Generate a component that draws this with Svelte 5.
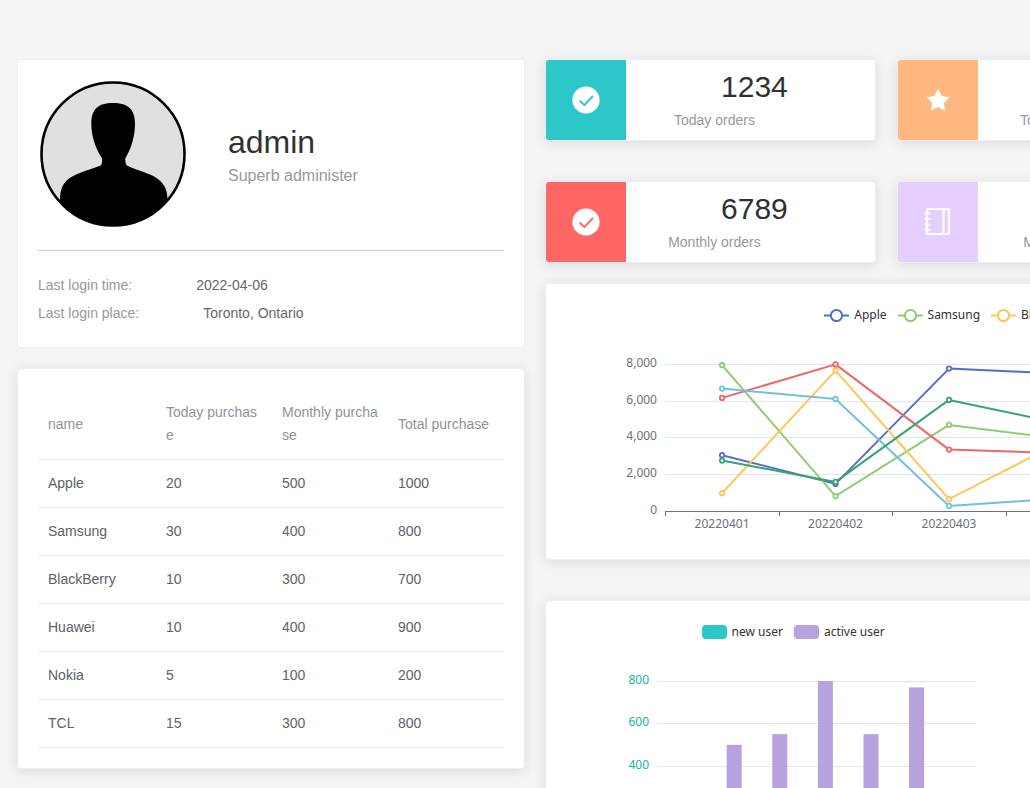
<script>
  const rows = [
    { name: 'Apple', today: 20, month: 500, total: 1000 },
    { name: 'Samsung', today: 30, month: 400, total: 800 },
    { name: 'BlackBerry', today: 10, month: 300, total: 700 },
    { name: 'Huawei', today: 10, month: 400, total: 900 },
    { name: 'Nokia', today: 5, month: 100, total: 200 },
    { name: 'TCL', today: 15, month: 300, total: 800 }
  ];

  const stats = [
    { value: 1234, label: 'Today orders', icon: 'success', color: '#2ec7c9' },
    { value: 3421, label: 'Today revenue', icon: 'star', color: '#ffb980' },
    { value: 1234, label: 'Today visitors', icon: 'success', color: '#5ab1ef' },
    { value: 6789, label: 'Monthly orders', icon: 'success', color: '#ff6666' },
    { value: 5678, label: 'Monthly sales', icon: 'notebook', color: '#e5cfff' },
    { value: 1234, label: 'Monthly visitors', icon: 'star', color: '#5ab1ef' }
  ];

  const series = [
    { name: 'Apple', color: '#5470c6', data: [3058, 1497, 7771, 7494, 5200, 3100, 4400] },
    { name: 'Samsung', color: '#91cc75', data: [7956, 827, 4707, 3946, 2600, 5100, 6200] },
    { name: 'BlackBerry', color: '#fac858', data: [990, 7663, 664, 3837, 6100, 2200, 1500] },
    { name: 'Huawei', color: '#ee6666', data: [6177, 8000, 3363, 3162, 1900, 4700, 7100] },
    { name: 'Nokia', color: '#73c0de', data: [6683, 6122, 299, 707, 3500, 6400, 2800] },
    { name: 'TCL', color: '#3ba272', data: [2765, 1605, 6068, 4762, 7200, 900, 5300] }
  ];
  const days = ['20220401', '20220402', '20220403', '20220404', '20220405', '20220406', '20220407'];

  const left = 99.3;
  const right = 893.7;
  const step = (right - left) / days.length;
  const px = (i) => left + step * (i + 0.5);
  const py = (v) => 185.4 - (v * 147) / 8000;
  const lineTicks = [8000, 6000, 4000, 2000, 0];

  const bars = [
    { name: 'Mon', fresh: 5, active: 200 },
    { name: 'Tue', fresh: 12, active: 500 },
    { name: 'Wed', fresh: 60, active: 550 },
    { name: 'Thu', fresh: 65, active: 800 },
    { name: 'Fri', fresh: 40, active: 550 },
    { name: 'Sat', fresh: 60, active: 770 },
    { name: 'Sun', fresh: 30, active: 170 }
  ];
  const barLeft = 91;
  const barRight = 410;
  const band = (barRight - barLeft) / bars.length;
  const by = (v) => 208 - (v * 170) / 800;
  const barTicks = [800, 600, 400, 200, 0];
</script>

<main class="dashboard">
  <div class="column side">
    <section class="card profile">
      <div class="user">
        <svg class="avatar" viewBox="0 0 150 150" aria-hidden="true">
          <clipPath id="face"><circle cx="75" cy="74" r="72" /></clipPath>
          <circle cx="75" cy="74" r="71.5" fill="#e0e0e0" />
          <path
            clip-path="url(#face)"
            d="M75 23C90 23 97 29 97 44C97 58 92 71 87.300 78.300C87.300 82 87.500 84 89 85.500C95 89 107 92 115.300 96C126 102 129.500 109 129.500 120L129 150H22V120C22 109 25 101 35.300 96C44 91.500 57 88 62.700 85.500C64 84 64.300 82 64 78.300C59 71 53.300 58 53.300 44C53.300 29 60 23 75 23Z"
          />
          <circle cx="75" cy="74" r="71.5" fill="none" stroke="#000" stroke-width="2.600" />
        </svg>
        <div>
          <h1>admin</h1>
          <p class="role">Superb administer</p>
        </div>
      </div>
      <div class="login">
        <p>Last login time:<span>2022-04-06</span></p>
        <p>Last login place:<span>Toronto, Ontario</span></p>
      </div>
    </section>

    <section class="card raised">
      <table>
        <thead>
          <tr>
            <th scope="col">name</th>
            <th scope="col">Today purchase</th>
            <th scope="col">Monthly purchase</th>
            <th scope="col">Total purchase</th>
          </tr>
        </thead>
        <tbody>
          {#each rows as row}
            <tr>
              <td>{row.name}</td>
              <td>{row.today}</td>
              <td>{row.month}</td>
              <td>{row.total}</td>
            </tr>
          {/each}
        </tbody>
      </table>
    </section>
  </div>

  <div class="column">
    <div class="stats">
      {#each stats as stat}
        <section class="stat raised">
          <div class="badge" style:background={stat.color}>
            <svg viewBox="-15 -15 30 30" aria-hidden="true">
              {#if stat.icon === 'success'}
                <circle r="13.600" fill="#fff" />
                <path d="M-6.300 .8L-1.600 5.200L6.900 -4" fill="none" stroke={stat.color} stroke-width="1.900" />
              {:else if stat.icon === 'star'}
                <path
                  fill="#fff"
                  d="M0 -11.300L3.600 -4L11.600 -2.800L5.800 2.800L7.200 10.700L0 7L-7.200 10.700L-5.800 2.800L-11.600 -2.800L-3.600 -4Z"
                />
              {:else}
                <rect x="-11" y="-13" width="22" height="25" rx="1" fill="none" stroke="#fff" stroke-width="2.200" />
                <path
                  d="M5.500 -12.500V12M-13.500 -8.500H-7.500M-13.500 -3H-7.500M-13.500 2.500H-7.500M-13.500 8H-7.500"
                  fill="none"
                  stroke="#fff"
                  stroke-width="2.200"
                />
              {/if}
            </svg>
          </div>
          <div class="detail">
            <p class="value">{stat.value}</p>
            <p class="label">{stat.label}</p>
          </div>
        </section>
      {/each}
    </div>

    <section class="card raised chart">
      <ul class="legend">
        {#each series as s}
          <li>
            <svg width="25" height="14" viewBox="0 0 25 14" aria-hidden="true">
              <path d="M0 7.500H25" stroke={s.color} stroke-width="2" />
              <circle cx="12.500" cy="7.500" r="5.600" fill="#fff" stroke={s.color} stroke-width="2" />
            </svg>
            {s.name}
          </li>
        {/each}
      </ul>
      <svg class="plot" viewBox="0 0 992 213" role="img" aria-label="Orders by brand">
        {#each lineTicks as t}
          <path
            d="M{left} {Math.floor(py(t)) + 0.5}H{right}"
            stroke={t === 0 ? '#6e7079' : '#e0e6f1'}
          />
          <text x="91" y={Math.floor(py(t)) + 3} text-anchor="end">{t.toLocaleString('en-US')}</text>
        {/each}
        {#each days as day, i}
          <path d="M{Math.round(left + step * i) + 0.5} 185V190" stroke="#6e7079" />
          <text x={px(i)} y="202" text-anchor="middle">{day}</text>
        {/each}
        {#each series as s}
          <polyline
            points={s.data.map((v, i) => `${px(i)},${py(v)}`).join(' ')}
            fill="none"
            stroke={s.color}
            stroke-width="2"
            stroke-linejoin="bevel"
          />
          {#each s.data as v, i}
            <circle cx={px(i)} cy={py(v)} r="2.200" fill="#fff" stroke={s.color} stroke-width="1.800" />
          {/each}
        {/each}
      </svg>
    </section>

    <div class="halves">
      <section class="card raised chart">
        <ul class="legend">
          <li><i class="swatch fresh"></i>new user</li>
          <li><i class="swatch active"></i>active user</li>
        </ul>
        <svg class="plot green" viewBox="0 0 454 240" role="img" aria-label="New and active users">
          {#each barTicks as t}
            <path d="M{barLeft} {Math.floor(by(t)) + 0.5}H{barRight}" stroke="#e0e6f1" />
            <text x="83" y={Math.floor(by(t)) + 3} text-anchor="end">{t}</text>
          {/each}
          {#each bars as b, i}
            <rect x={barLeft + band * i + 6} y={by(b.fresh)} width="15" height={208 - by(b.fresh)} fill="#2ec7c9" />
            <rect x={barLeft + band * i + 24} y={by(b.active)} width="15" height={208 - by(b.active)} fill="#b6a2de" />
            <text x={barLeft + band * (i + 0.5)} y="225" text-anchor="middle">{b.name}</text>
          {/each}
        </svg>
      </section>
      <section class="card raised chart"></section>
    </div>
  </div>
</main>

<style>
  :global(body) {
    margin: 0;
    background: #f4f4f4;
  }

  .dashboard {
    display: grid;
    grid-template-columns: minmax(508px, 1fr) minmax(1034px, 2fr);
    gap: 20px;
    align-items: start;
    padding: 59px 17px;
    font-family: 'Liberation Sans', Arial, sans-serif;
    font-size: 14px;
    color: #303133;
  }

  .column {
    display: grid;
    gap: 20px;
    min-width: 0;
  }

  h1,
  p,
  ul {
    margin: 0;
    padding: 0;
    font-weight: 400;
  }

  .card,
  .stat {
    box-sizing: border-box;
    border: 1px solid #ebeef5;
    border-radius: 4px;
    background: #fff;
  }

  .card {
    padding: 20px;
  }

  .raised {
    box-shadow: 0 2px 12px rgba(0, 0, 0, 0.1);
  }

  .user {
    display: flex;
    align-items: center;
    gap: 40px;
    padding-bottom: 20px;
    border-bottom: 1px solid #ccc;
  }

  .avatar {
    width: 150px;
    height: 150px;
  }

  h1 {
    font-size: 32px;
    line-height: 42px;
  }

  .role {
    font-size: 16px;
    line-height: 26px;
    color: #999;
  }

  .login {
    padding-top: 20px;
    line-height: 28px;
    color: #999;
  }

  .login span {
    margin-left: 64px;
    color: #666;
  }

  table {
    width: 100%;
    table-layout: fixed;
    border-collapse: separate;
    border-spacing: 0;
    line-height: 23px;
    color: #606266;
  }

  th,
  td {
    padding: 12px 10px;
    border-bottom: 1px solid #ebeef5;
    text-align: left;
    font-weight: 400;
    word-break: break-all;
  }

  th {
    color: #909399;
  }

  th:first-child {
    width: 98px;
  }

  .stats {
    display: grid;
    grid-template-columns: repeat(3, 32%);
    justify-content: space-between;
    row-gap: 40px;
  }

  .stat {
    display: flex;
    overflow: hidden;
  }

  .badge {
    display: grid;
    place-items: center;
    width: 80px;
    height: 80px;
  }

  .badge svg {
    width: 30px;
    height: 30px;
  }

  .detail {
    flex: 1;
    display: flex;
    flex-direction: column;
    justify-content: center;
    text-align: center;
  }

  .value {
    padding-left: 8px;
    font-size: 30px;
    line-height: 40px;
  }

  .label {
    padding-right: 72px;
    line-height: 26px;
    color: #999;
  }

  .chart {
    font-family: 'Noto Sans', 'Open Sans', sans-serif;
    font-size: 12px;
  }

  .legend {
    display: flex;
    justify-content: center;
    gap: 11px;
    line-height: 22px;
    list-style: none;
    color: #333;
  }

  .legend li {
    display: flex;
    align-items: center;
    gap: 5px;
  }

  .swatch {
    width: 25px;
    height: 14px;
    border-radius: 4px;
  }

  .fresh {
    background: #2ec7c9;
  }

  .active {
    background: #b6a2de;
  }

  .plot {
    display: block;
    width: 100%;
    height: auto;
    fill: #6e7079;
  }

  .green {
    fill: #17b3a3;
  }

  .halves {
    display: grid;
    grid-template-columns: repeat(2, 48%);
    justify-content: space-between;
    padding-top: 20px;
  }
</style>
